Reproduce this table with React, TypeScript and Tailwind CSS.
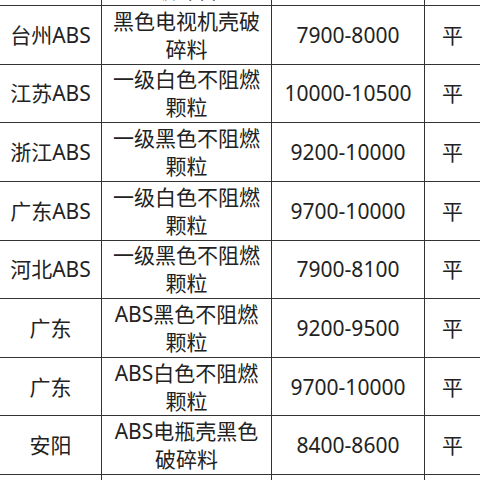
const rows = [
  { region: "福建ABS", grade: "电视机外壳黑色破碎料", price: "8000-8200", trend: "平" },
  { region: "台州ABS", grade: "黑色电视机壳破碎料", price: "7900-8000", trend: "平" },
  { region: "江苏ABS", grade: "一级白色不阻燃颗粒", price: "10000-10500", trend: "平" },
  { region: "浙江ABS", grade: "一级黑色不阻燃颗粒", price: "9200-10000", trend: "平" },
  { region: "广东ABS", grade: "一级白色不阻燃颗粒", price: "9700-10000", trend: "平" },
  { region: "河北ABS", grade: "一级黑色不阻燃颗粒", price: "7900-8100", trend: "平" },
  { region: "广东", grade: "ABS黑色不阻燃颗粒", price: "9200-9500", trend: "平" },
  { region: "广东", grade: "ABS白色不阻燃颗粒", price: "9700-10000", trend: "平" },
  { region: "安阳", grade: "ABS电瓶壳黑色破碎料", price: "8400-8600", trend: "平" },
  { region: "山东", grade: "ABS白色不阻燃颗粒", price: "9500-9800", trend: "平" },
];

export default function App() {
  return (
    <div
      className="w-[480px] h-[480px] overflow-hidden bg-white text-[#222] text-[21px] leading-[28px]"
      style={{ fontFamily: '"Noto Sans", "Noto Sans CJK SC", sans-serif' }}
    >
      <div className="mt-[-52.6px]">
        {rows.map((r, i) => (
          <div key={i} className="flex h-[58.625px] border-b border-[#333]">
            <div className="w-[102px] shrink-0 border-r border-[#333] flex items-center justify-center text-center px-1">
              {r.region}
            </div>
            <div className="w-[170px] shrink-0 border-r border-[#333] flex items-center justify-center text-center px-2">
              {r.grade}
            </div>
            <div className="w-[153px] shrink-0 border-r border-[#333] flex items-center justify-center text-center">
              {r.price}
            </div>
            <div className="flex-1 flex items-center justify-center">{r.trend}</div>
          </div>
        ))}
      </div>
    </div>
  );
}
